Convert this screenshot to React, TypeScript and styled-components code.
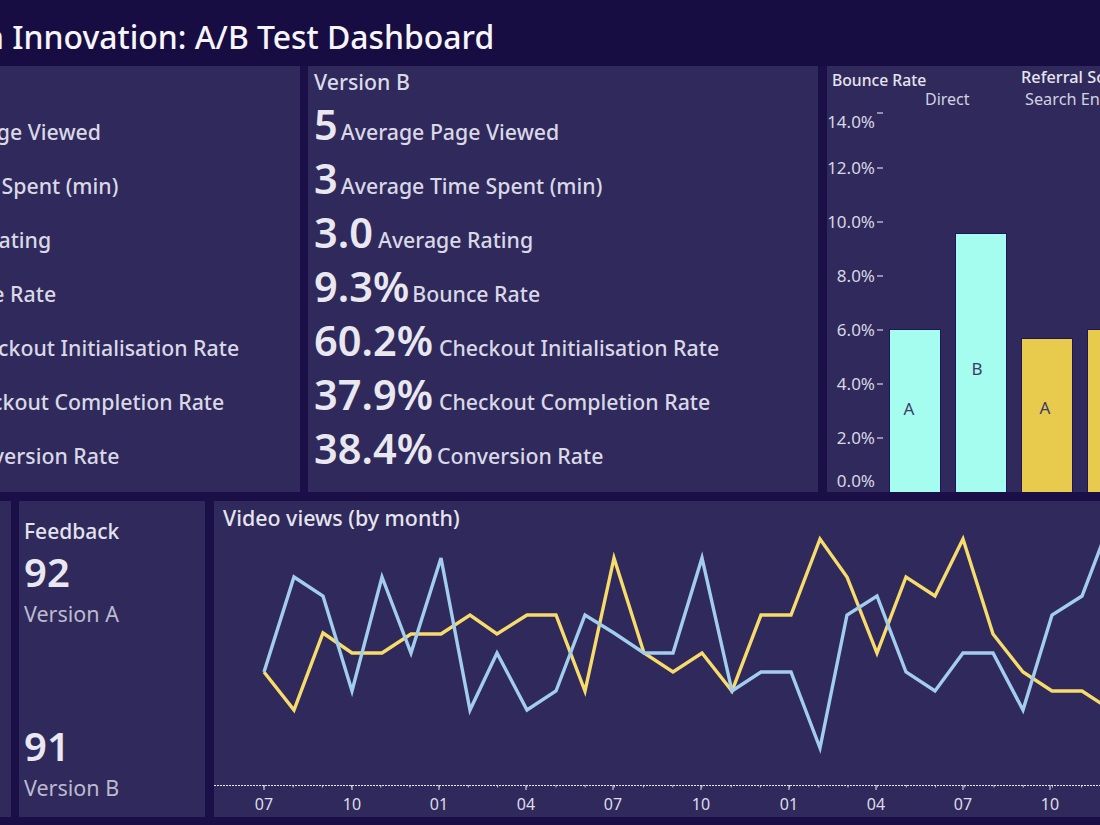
import React from "react";
import styled, { createGlobalStyle } from "styled-components";

const Global = createGlobalStyle`
  html, body { margin: 0; padding: 0; background: #1a1047; overflow: hidden; }
  #root { width: 1100px; height: 825px; overflow: hidden; }
`;
const FONT = `"Noto Sans", "Open Sans", sans-serif`;

const Page = styled.div`
  width: 1100px; height: 825px; overflow: hidden; background: #1a1047;
  font-family: ${FONT}; display: flex; flex-direction: column;
`;
const Header = styled.header`
  height: 66px; flex: none; box-sizing: border-box; padding-top: 7px; display: flex; align-items: center; background: #170d42;
`;
const Title = styled.h1`
  margin: 0 0 0 -16px; font-size: 31.9px; font-weight: 500; color: #f6f5fa; white-space: nowrap; line-height: 1;
`;
const TopRow = styled.div`
  display: flex; height: 426px; flex: none; margin-left: -176px; gap: 8px;
`;
const BottomRow = styled.div`
  display: flex; height: 316px; flex: none; margin-top: 9px; margin-left: -89px; gap: 8px;
`;
const Panel = styled.section<{ $w: number }>`
  width: ${(p) => p.$w}px; flex: none; background: #2f2a5b; box-sizing: border-box; overflow: hidden;
`;
const MetricsPanel = styled(Panel)`
  padding: 0 6px;
`;
const ChartPanel = styled(Panel)`
  margin-left: 1px;
`;
const PanelHead = styled.h2`
  margin: 0; height: 31px; line-height: 32px; font-size: 21.3px; font-weight: 500; color: #dcdae8;
`;
const Metric = styled.div`
  display: flex; align-items: baseline; height: 54px; white-space: nowrap;
`;
const Value = styled.span<{ $gap: number }>`
  font-size: 41.5px; font-weight: 600; color: #e9e8f1; line-height: 54px; margin-right: ${(p) => p.$gap}px;
`;
const Label = styled.span`
  font-size: 21.3px; font-weight: 500; color: #dad8e6;
`;
const FeedbackPanel = styled(Panel)`
  padding: 14px 5px 0; display: flex; flex-direction: column; margin-right: 1px;
`;
const FeedbackHead = styled.div`
  font-size: 21px; font-weight: 500; color: #e4e2ec; line-height: 32px;
`;
const Score = styled.div<{ $top?: number }>`
  font-size: 40px; font-weight: 600; color: #e9e8f1; line-height: 50px;
  margin-top: ${(p) => p.$top ?? 0}px;
`;
const Version = styled.div`
  font-size: 21.5px; color: #bdbad0; line-height: 30px; margin-top: 2px;
`;
const Plot = styled.svg`
  display: block; font-family: ${FONT};
`;

const yAxis: [string, number, number][] = [
  ["14.0%", 122, 113], ["12.0%", 168, 168], ["10.0%", 222, 222], ["8.0%", 276, 276],
  ["6.0%", 330, 330], ["4.0%", 384, 384], ["2.0%", 438, 438], ["0.0%", 481, 0],
];
const bars = [
  { x: 890, top: 330, fill: "#a4fdee", label: "A", lx: 909, ly: 409 },
  { x: 956, top: 234, fill: "#a4fdee", label: "B", lx: 977, ly: 369 },
  { x: 1022, top: 339, fill: "#e8ca4d", label: "A", lx: 1045, ly: 408 },
  { x: 1088, top: 330, fill: "#e8ca4d", label: "B", lx: 1111, ly: 408 },
];

function BarChart() {
  return (
    <Plot width={300} height={426} viewBox="827 66 300 426">
      <text x={832} y={86} fontSize={15.7} fontWeight={500} fill="#e6e4ee">Bounce Rate</text>
      <text x={1021} y={83} fontSize={16.3} fontWeight={500} fill="#e6e4ee">Referral Source</text>
      <text x={925} y={105} fontSize={16} fill="#d3d1e2">Direct</text>
      <text x={1025} y={105} fontSize={16.3} fill="#d3d1e2">Search Engine</text>
      {yAxis.map(([t, y, tick]) => (
        <g key={t}>
          <text x={875} y={y + 6} fontSize={17} textAnchor="end" fill="#d8d6e3">{t}</text>
          {tick > 0 && <line x1={877} x2={883} y1={tick} y2={tick} stroke="#d8d6e3" strokeWidth={1.2} />}
        </g>
      ))}
      {bars.map((b) => (
        <g key={b.x}>
          <rect x={b.x - 0.5} y={b.top - 0.5} width={51} height={492 - b.top + 1} fill={b.fill} stroke="#21145a" />
          <text x={b.lx} y={b.ly + 6} fontSize={17} textAnchor="middle" fill="#3f3a68">{b.label}</text>
        </g>
      ))}
    </Plot>
  );
}

const blue = "264,672 294,577 323,596 352,691 382,577 411,653 441,558 470,710 497,653 527,710 556,691 585,615 614,633 644,653 673,653 702,558 732,691 761,672 791,672 820,748 847,615 877,596 906,672 935,691 963,653 993,653 1023,710 1052,615 1082,596 1111,520";
const yellow = "264,672 294,710 323,633 352,653 382,653 411,634 441,634 470,615 497,634 527,615 556,615 585,691 614,558 644,653 673,672 702,653 732,691 761,615 791,615 820,539 847,577 877,653 906,577 935,596 963,539 993,634 1023,672 1052,691 1082,691 1111,710";
const months = [
  [264, "07"], [352, "10"], [439, "01"], [526, "04"], [613, "07"],
  [701, "10"], [789, "01"], [876, "04"], [963, "07"], [1050, "10"],
] as const;
const minor = Array.from({ length: 30 }, (_, i) => 264 + i * 29.2);

function LineChart() {
  return (
    <Plot width={900} height={316} viewBox="214 501 900 316">
      <text x={223} y={526} fontSize={21.4} fontWeight={500} fill="#e6e4ee">Video views (by month)</text>
      <line x1={214} x2={1114} y1={785.5} y2={785.5} stroke="#e8e6f0" strokeWidth={1} strokeDasharray="2 1" />
      {minor.map((x) => (
        <line key={x} x1={x} x2={x} y1={785} y2={787.5} stroke="#e8e6f0" strokeWidth={0.8} />
      ))}
      {months.map(([x, t], i) => (
        <g key={i}>
          <line x1={x} x2={x} y1={785} y2={790} stroke="#e8e6f0" strokeWidth={1} />
          <text x={x} y={810} fontSize={16} textAnchor="middle" fill="#dedcea">{t}</text>
        </g>
      ))}
      <polyline points={yellow} fill="none" stroke="#f7dc6b" strokeWidth={3.4} strokeLinejoin="miter" />
      <polyline points={blue} fill="none" stroke="#a3cdec" strokeWidth={3.4} strokeLinejoin="miter" />
    </Plot>
  );
}

type Row = [string, string, number];
const versionA: Row[] = [
  ["10", "Average Page Viewed", 5], ["3", "Average Time Spent (min)", 3], ["3.1", "Average Rating", 7],
  ["9.6%", "Bounce Rate", 3], ["60.0%", "Checkout Initialisation Rate", 10],
  ["37.8%", "Checkout Completion Rate", 4], ["38.1%", "Conversion Rate", 4],
];
const versionB: Row[] = [
  ["5", "Average Page Viewed", 3], ["3", "Average Time Spent (min)", 3], ["3.0", "Average Rating", 5],
  ["9.3%", "Bounce Rate", 3], ["60.2%", "Checkout Initialisation Rate", 6],
  ["37.9%", "Checkout Completion Rate", 6], ["38.4%", "Conversion Rate", 4],
];

function Metrics({ title, rows, w }: { title: string; rows: Row[]; w: number }) {
  return (
    <MetricsPanel $w={w}>
      <PanelHead>{title}</PanelHead>
      {rows.map(([v, l, g]) => (
        <Metric key={l}>
          <Value $gap={g}>{v}</Value>
          <Label>{l}</Label>
        </Metric>
      ))}
    </MetricsPanel>
  );
}

export default function App() {
  return (
    <Page>
      <Global />
      <Header>
        <Title>n Innovation: A/B Test Dashboard</Title>
      </Header>
      <TopRow>
        <Metrics title="Version A" rows={versionA} w={476} />
        <Metrics title="Version B" rows={versionB} w={510} />
        <ChartPanel $w={300}><BarChart /></ChartPanel>
      </TopRow>
      <BottomRow>
        <Panel $w={100} />
        <FeedbackPanel $w={186}>
          <FeedbackHead>Feedback</FeedbackHead>
          <Score>92</Score>
          <Version>Version A</Version>
          <Score $top={92}>91</Score>
          <Version>Version B</Version>
        </FeedbackPanel>
        <Panel $w={900}><LineChart /></Panel>
      </BottomRow>
    </Page>
  );
}
